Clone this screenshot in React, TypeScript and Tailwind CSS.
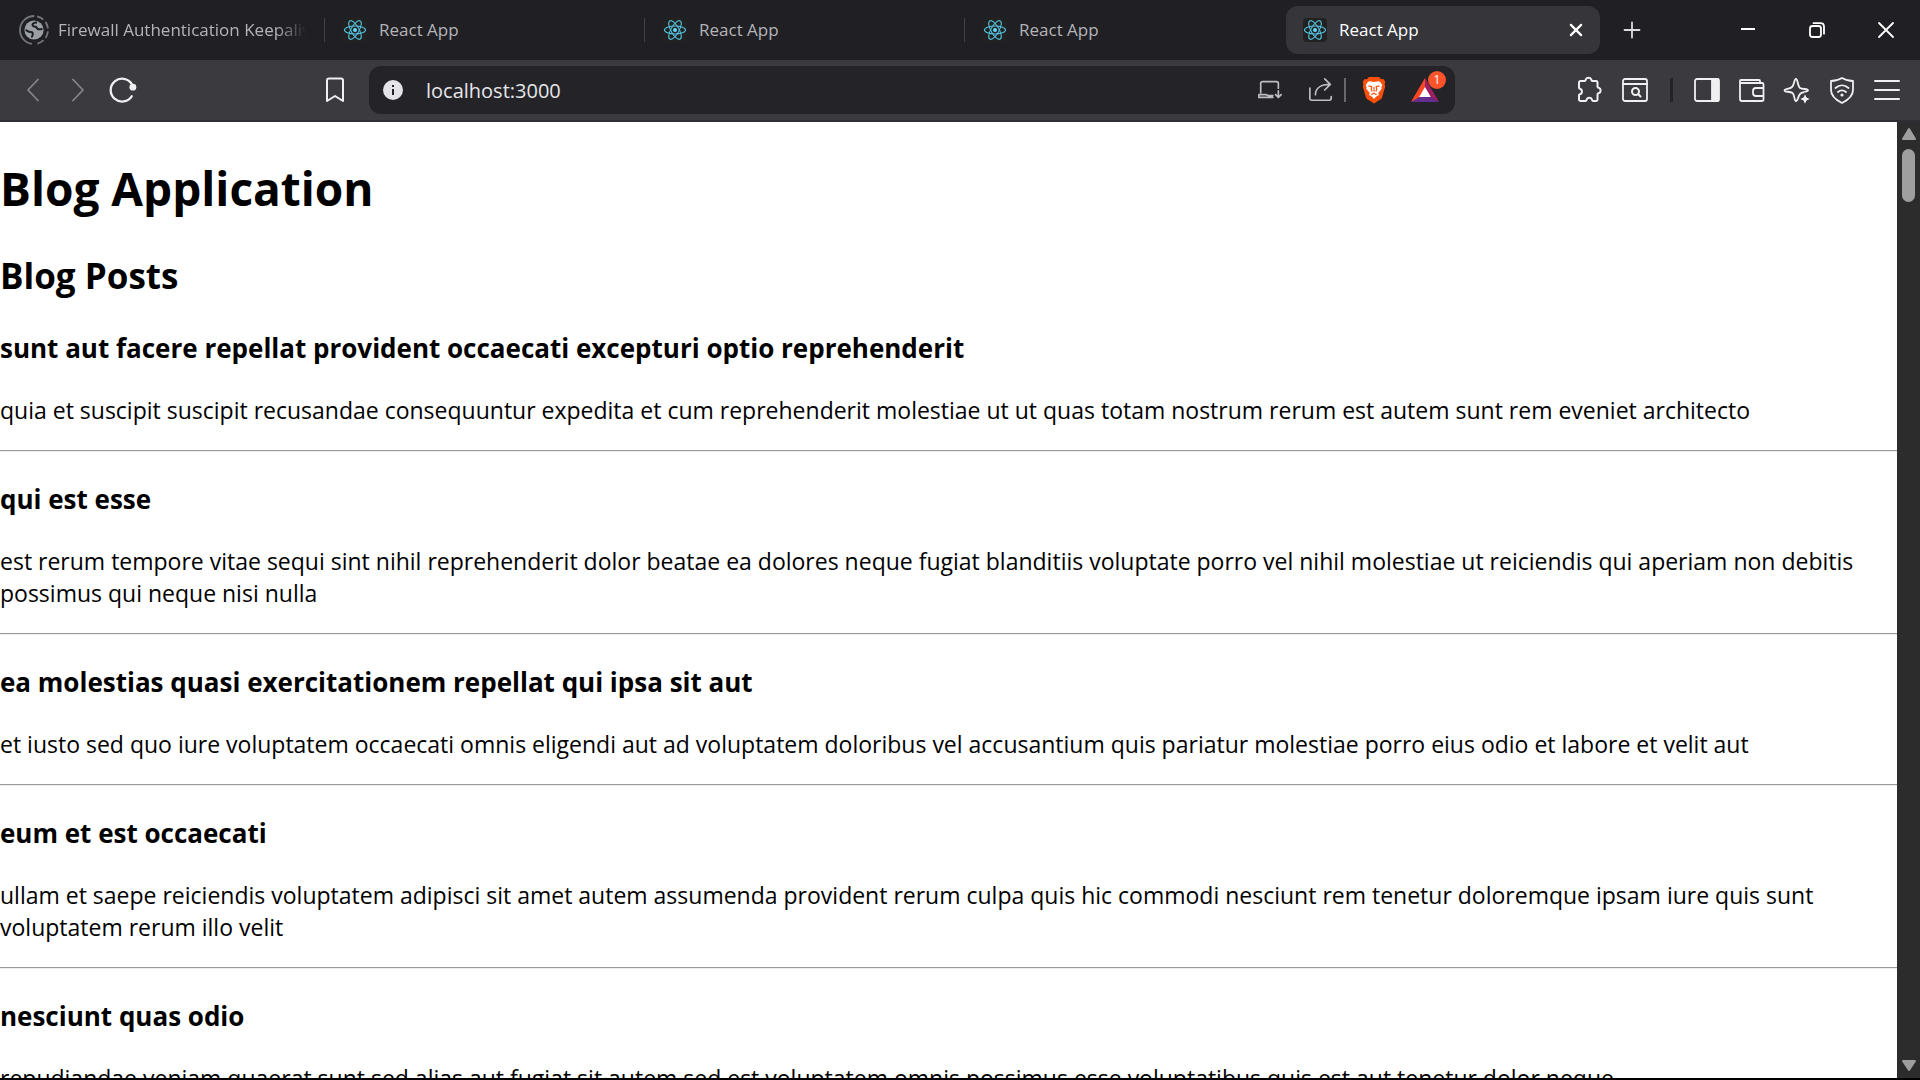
import React from "react";

const posts = [
  ["sunt aut facere repellat provident occaecati excepturi optio reprehenderit", "quia et suscipit suscipit recusandae consequuntur expedita et cum reprehenderit molestiae ut ut quas totam nostrum rerum est autem sunt rem eveniet architecto"],
  ["qui est esse", "est rerum tempore vitae sequi sint nihil reprehenderit dolor beatae ea dolores neque fugiat blanditiis voluptate porro vel nihil molestiae ut reiciendis qui aperiam non debitis possimus qui neque nisi nulla"],
  ["ea molestias quasi exercitationem repellat qui ipsa sit aut", "et iusto sed quo iure voluptatem occaecati omnis eligendi aut ad voluptatem doloribus vel accusantium quis pariatur molestiae porro eius odio et labore et velit aut"],
  ["eum et est occaecati", "ullam et saepe reiciendis voluptatem adipisci sit amet autem assumenda provident rerum culpa quis hic commodi nesciunt rem tenetur doloremque ipsam iure quis sunt voluptatem rerum illo velit"],
  ["nesciunt quas odio", "repudiandae veniam quaerat sunt sed alias aut fugiat sit autem sed est voluptatem omnis possimus esse voluptatibus quis est aut tenetur dolor neque"],
];

function ReactLogo() {
  return (
    <svg viewBox="0 0 24 24" className="size-6 shrink-0 rounded-sm bg-[#222]" fill="none" stroke="#53c1de" strokeWidth="1.1">
      <ellipse cx="12" cy="12" rx="10.5" ry="4" />
      <ellipse cx="12" cy="12" rx="10.5" ry="4" transform="rotate(60 12 12)" />
      <ellipse cx="12" cy="12" rx="10.5" ry="4" transform="rotate(120 12 12)" />
      <circle cx="12" cy="12" r="2" fill="#61dafb" stroke="none" />
    </svg>
  );
}

function Globe() {
  return (
    <svg viewBox="0 0 32 32" className="size-8 shrink-0" fill="none">
      <circle cx="16" cy="16" r="14" stroke="#74767a" strokeWidth="1.8" strokeDasharray="42 3 7 3 7 3 7 3 7 6" transform="rotate(98 16 16)" />
      <circle cx="16" cy="16" r="9.6" fill="#9aa0a6" />
      <path d="M7.500 16c2 .5 3 2.300 5 2 2-.2 2.500.8 2.200 2.500-.2 1.500-1 2-.7 3M19 8.500c-2 0-4 .5-4.500 2-.4 1.600 1.500 2 3 2.200 1.800.3 1 2.300 3 2.600 1.600.200 2.500-.300 4-.300" stroke="#202024" strokeWidth="2" />
    </svg>
  );
}

function Icon({ children, className = "size-7" }: { children: React.ReactNode; className?: string }) {
  return (
    <svg viewBox="0 0 28 28" className={className} fill="none" stroke="currentColor" strokeWidth="1.8" strokeLinecap="round" strokeLinejoin="round">
      {children}
    </svg>
  );
}

function Btn({ label, children, className = "" }: { label: string; children: React.ReactNode; className?: string }) {
  return (
    <button type="button" aria-label={label} className={`flex shrink-0 items-center justify-center ${className}`}>
      {children}
    </button>
  );
}

function TabBar() {
  return (
    <div className="flex h-15 items-center bg-[#202024] text-[17px] leading-7 text-[#b4b4b8]">
      <div role="tablist" className="flex flex-1 items-center">
        <button role="tab" type="button" className="flex h-12 w-81 items-center gap-2 pl-[18px] text-left">
          <Globe />
          <span className="mr-[18px] min-w-0 flex-1 overflow-hidden whitespace-nowrap [mask-image:linear-gradient(to_right,black_88%,transparent)]">Firewall Authentication Keepalive</span>
        </button>
        {[0, 1, 2].map((i) => (
          <button key={i} role="tab" type="button" className="flex h-6 w-80 items-center gap-3 border-l border-[#414146] pl-[18px]">
            <ReactLogo />
            React App
          </button>
        ))}
        <div className="ml-0.5 flex h-12 w-[314px] items-center rounded-xl bg-[#35353a] pr-3 pl-[17px] text-white">
          <button role="tab" aria-selected="true" type="button" className="flex flex-1 items-center gap-3">
            <ReactLogo />
            React App
          </button>
          <Btn label="Close tab" className="size-6">
            <Icon className="size-6"><path d="m8 8 12 12M20 8 8 20" strokeWidth="2.600" /></Icon>
          </Btn>
        </div>
        <Btn label="New tab" className="ml-4 size-8 text-[#dcdce0]">
          <Icon><path d="M14 6.500v15M6.500 14h15" /></Icon>
        </Btn>
      </div>
      <div className="flex text-white">
        <Btn label="Minimize" className="h-15 w-[69px]"><Icon><path d="M7 13h14" strokeLinecap="butt" strokeWidth="2" /></Icon></Btn>
        <Btn label="Restore" className="h-15 w-[69px]">
          <Icon><rect x="7" y="10" width="11" height="11" rx="2.500" /><path d="M10.500 7.200h7c2 0 3.500 1.500 3.500 3.500v7" /></Icon>
        </Btn>
        <Btn label="Close" className="h-15 w-[69px]"><Icon><path d="m7 7 14 14M21 7 7 21" /></Icon></Btn>
      </div>
    </div>
  );
}

function Lion() {
  return (
    <svg viewBox="0 0 24 28" className="h-7 w-6">
      <path d="M7 1h10l2.200 2.300 2.200-.3 2 3-.8 2 .6 2.500-3.200 11c-.3 1-1 1.600-1.800 2.100L12 27.500l-6.200-3.900c-.8-.5-1.500-1.100-1.800-2.100L.8 10.500 1.400 8l-.8-2 2-3 2.200.3z" fill="#fb4f0a" />
      <path d="M8 5.200l4 .8 4-.8 2 .6 2.300 3.200-.9 2.200.3 1.500-3.400 4.300.6 2-2.600 1.600L12 23l-2.300-2.400L7.100 19l.6-2-3.400-4.300.3-1.500L3.700 9 6 5.800z" fill="#fff" />
      <path d="M6.500 9.800l3.300.9-.6 2.300 1 2.500M17.500 9.800l-3.300.9.6 2.300-1 2.500M12 11v4.500M9.300 18.800 12 17.300l2.700 1.500" fill="none" stroke="#fb4f0a" strokeWidth="1.200" />
    </svg>
  );
}

function Toolbar() {
  return (
    <div className="flex h-[62px] items-center border-b-2 border-[#2f2f33] bg-[#3b3b3f] text-[#f0f0f3]">
      <div className="flex w-[369px] items-center pl-[18px]">
        <Btn label="Back" className="mr-4 text-[#85858a]"><Icon><path d="M20 3.500 10 14l10 10.500" /></Icon></Btn>
        <Btn label="Forward" className="mr-4 text-[#85858a]"><Icon><path d="m11 3.500 10 10.500-10 10.500" /></Icon></Btn>
        <Btn label="Reload">
          <Icon className="size-8"><path d="M22.500 19.500A10 10 0 1 1 22.600 8.800" strokeWidth="2" /><circle cx="23.500" cy="11.500" r="3" fill="currentColor" stroke="none" /></Icon>
        </Btn>
        <Btn label="Bookmark" className="mr-5 ml-auto">
          <Icon><path d="M8 2.500h12a2 2 0 0 1 2 2V25l-8-5-8 5V4.500a2 2 0 0 1 2-2z" strokeWidth="2" /></Icon>
        </Btn>
      </div>
      <div className="flex h-12 flex-1 items-center rounded-xl bg-[#242428] pr-3 pl-3.5">
        <Btn label="Site information">
          <svg viewBox="0 0 20 20" className="size-5"><circle cx="10" cy="10" r="10" fill="#e3e3e8" /><path d="M10 9v6M10 5v2" stroke="#242428" strokeWidth="2" /></svg>
        </Btn>
        <input aria-label="Address" defaultValue="localhost:3000" className="mx-[23px] min-w-0 flex-1 bg-transparent pt-0.5 text-xl text-[#e6e6ea] outline-none" />
        <Btn label="Install app" className="mr-[25px] text-[#bdbdc2]">
          <Icon className="size-[26px]"><path d="M4 17V7a2 2 0 0 1 2-2h15a2 2 0 0 1 2 2v5M17 22H2v-3h8l2 1h5M23 15v7m-3-3 3 3 3-3" /></Icon>
        </Btn>
        <Btn label="Share" className="mr-2.5 text-[#bdbdc2]">
          <Icon className="size-[26px]"><path d="M2 12v11a2 2 0 0 0 2 2h19a2 2 0 0 0 2-2v-2M8 19c0-7 6-11 16-11M18 2l6 6-6 6" /></Icon>
        </Btn>
        <div className="mr-4 h-6 w-0.5 bg-[#68686d]" />
        <Btn label="Brave Shields" className="mr-[21px]"><Lion /></Btn>
        <Btn label="Brave Rewards" className="relative size-9">
          <svg viewBox="0 0 28 24" className="h-6 w-7"><path d="M14 0 0 24l9-5 5-9z" fill="#ff4724" /><path d="M14 0l14 24-9-5-5-9z" fill="#9e1f63" /><path d="M0 24h28l-9-5H9z" fill="#662d91" /><path d="m14 9 5.800 10H8.200z" fill="#fff" /></svg>
          <span className="absolute -top-px left-[21px] flex size-[18px] items-center justify-center rounded-full bg-[#fb542b] text-xs text-white">1</span>
        </Btn>
      </div>
      <div className="ml-[121px] flex items-center gap-[17px] pr-[19px]">
        <Btn label="Extensions"><Icon><path d="M5.500 5h4.300c.8 0 .7-.8 1-1.600.9-2.200 4.500-2.200 5.400 0 .3.800.2 1.600 1 1.600H21a1.500 1.500 0 0 1 1.500 1.500v4.300c0 .9.800.8 1.500 1.100 2.200.9 2.200 4.300 0 5.200-.7.300-1.500.2-1.500 1.100v5.300A1.500 1.500 0 0 1 21 25h-3c-.9 0-.8-.8-1.100-1.500-.9-2.200-4.300-2.200-5.200 0-.3.700-.2 1.500-1.100 1.500H5.500A1.500 1.500 0 0 1 4 23.500v-4.300c0-.9.800-.8 1.500-1.200 2-1 2-4 0-5-.7-.4-1.500-.3-1.500-1.200V6.500A1.500 1.500 0 0 1 5.500 5z" strokeWidth="2" transform="translate(-1 0)" /></Icon></Btn>
        <Btn label="Search tabs"><Icon><rect x="2" y="3" width="24" height="22" rx="2" /><path d="M2 8h24M17.500 18.500l2 2" strokeWidth="2" /><circle cx="14.500" cy="15.500" r="3.500" strokeWidth="2" /></Icon></Btn>
        <div className="mr-[3px] ml-1 h-6 w-[3px] bg-[#242428]" />
        <Btn label="Sidebar"><Icon><rect x="2" y="3" width="24" height="22" rx="2" /><path d="M19 3h6v22h-6z" fill="currentColor" /></Icon></Btn>
        <Btn label="Wallet"><Icon><path d="M22 7V5a1 1 0 0 0-1-1H3a1 1 0 0 0-1 1v18a2 2 0 0 0 2 2h20a1.500 1.500 0 0 0 1.500-1.500v-15A1.500 1.500 0 0 0 24 7H3M25.500 12H18a3 3 0 0 0-3 3v2a3 3 0 0 0 3 3h7.500" /></Icon></Btn>
        <Btn label="Leo AI"><Icon><path d="M13 3c2 0 1.500 7.500 4 9s8 .5 8 2.300-5 1.200-7.500 3.200S15 25 13 25s-1-6-3.500-8-8-.5-8-2.500 5-1 7.500-3.500S11 3 13 3z" /><path d="m22 17 1.800 4.200L28 23l-4.200 1.800L22 29l-1.800-4.200L16 23l4.200-1.800z" fill="currentColor" stroke="#3b3b3f" strokeWidth="1" /></Icon></Btn>
        <Btn label="VPN"><Icon><path d="M14 2c4 2.500 7 3 11 3v9c0 6-5 10-11 13C8 24 3 20 3 14V5c4 0 7-.5 11-3zM7.500 12c4-3.500 9-3.500 13 0M10 16c2.500-2 5.500-2 8 0" /><circle cx="14" cy="19" r="1.600" fill="currentColor" stroke="none" /></Icon></Btn>
        <Btn label="Menu"><Icon><path d="M2 5h24M2 14h24M2 23h24" strokeWidth="2" /></Icon></Btn>
      </div>
    </div>
  );
}

export default function App() {
  return (
    <div className="flex h-screen flex-col overflow-hidden border-b-2 border-black bg-white font-['Open_Sans','Noto_Sans',sans-serif]">
      <header className="shrink-0">
        <TabBar />
        <Toolbar />
      </header>
      <div className="flex min-h-0 flex-1">
        <main className="min-w-0 flex-1 overflow-hidden text-black">
          <h1 className="mt-[34px] mb-8 text-[46px] leading-[64px] font-bold">Blog Application</h1>
          <h2 className="mb-[30px] text-[35px] leading-[48px] font-bold">Blog Posts</h2>
          {posts.map(([title, body]) => (
            <article key={title}>
              <h3 className="mt-[29px] mb-[27px] text-[26px] leading-[37px] font-bold">{title}</h3>
              <p className="mb-6 text-[23px] leading-8">{body}</p>
              <hr className="h-0.5 border-t border-b border-t-[#9a9a9a] border-b-[#eee]" />
            </article>
          ))}
        </main>
        <div className="flex w-[23px] flex-col items-center bg-[#2c2c2c] py-1">
          <Btn label="Scroll up"><svg viewBox="0 0 16 16" className="size-4"><path d="M8 3 14 13H2z" fill="#9f9f9f" stroke="#9f9f9f" strokeWidth="2" strokeLinejoin="round" /></svg></Btn>
          <div className="mt-[7px] h-[53px] w-[13px] rounded-full bg-[#9f9f9f]" />
          <Btn label="Scroll down" className="mt-auto"><svg viewBox="0 0 16 16" className="size-4"><path d="M8 12 14 3H2z" fill="#9f9f9f" stroke="#9f9f9f" strokeWidth="2" strokeLinejoin="round" /></svg></Btn>
        </div>
      </div>
    </div>
  );
}
